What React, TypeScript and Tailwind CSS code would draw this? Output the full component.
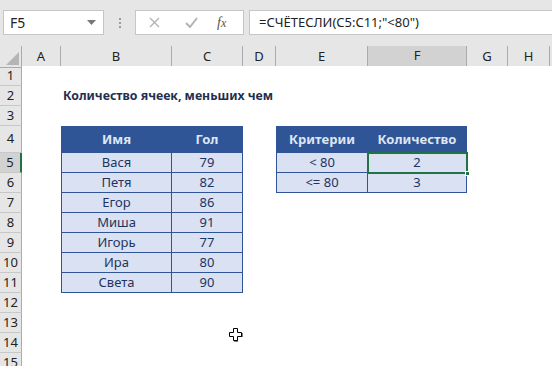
import React from "react";

const COLS = [
  { l: "", w: 22 },
  { l: "A", w: 39 },
  { l: "B", w: 111 },
  { l: "C", w: 71 },
  { l: "D", w: 33 },
  { l: "E", w: 92 },
  { l: "F", w: 99 },
  { l: "G", w: 41 },
  { l: "H", w: 42 },
];
const ROWH = [20, 20, 20, 27, 20, 20, 20, 20, 20, 20, 20, 20, 20, 20, 20];

const t1: [string, string][] = [
  ["Вася", "79"],
  ["Петя", "82"],
  ["Егор", "86"],
  ["Миша", "91"],
  ["Игорь", "77"],
  ["Ира", "80"],
  ["Света", "90"],
];
const t2: [string, string][] = [
  ["< 80", "2"],
  ["<= 80", "3"],
];

const font = { fontFamily: '"Noto Sans", "Open Sans", sans-serif' };

export default function App() {
  const cells: React.ReactNode[] = [];
  ROWH.forEach((_, ri) => {
    const r = ri + 1;
    cells.push(
      <div
        key={`rh${r}`}
        className={`flex items-center justify-center border-b border-[#c8c8c8] text-[13px] text-[#222] ${
          r === 5 ? "bg-[#d2d2d2] border-r-2 border-r-[#217346]" : "bg-[#e6e6e6] border-r border-r-[#ababab]"
        }`}
      >
        {r}
      </div>
    );
    for (let c = 1; c < COLS.length; c++) {
      const key = `c${r}-${c}`;
      const col = COLS[c].l;
      if ((col === "B" || col === "C") && r >= 4 && r <= 11) {
        const isHead = r === 4;
        const txt = isHead ? (col === "B" ? "Имя" : "Гол") : t1[r - 5][col === "B" ? 0 : 1];
        cells.push(
          <div
            key={key}
            className={`flex items-center justify-center border-b border-r border-[#2f5597] text-[13px] ${
              isHead ? "bg-[#2f5597] font-bold text-[#dfe6f3] border-t" : "bg-[#d9e1f2] text-[#1f3460]"
            } ${col === "B" ? "border-l" : ""}`}
          >
            {txt}
          </div>
        );
        continue;
      }
      if ((col === "E" || col === "F") && r >= 4 && r <= 6) {
        const isHead = r === 4;
        const txt = isHead ? (col === "E" ? "Критерии" : "Количество") : t2[r - 5][col === "E" ? 0 : 1];
        cells.push(
          <div
            key={key}
            className={`flex items-center justify-center border-b border-r border-[#2f5597] text-[13px] ${
              isHead ? "bg-[#2f5597] font-bold text-[#dfe6f3] border-t" : "bg-[#d9e1f2] text-[#1f3460]"
            } ${col === "E" ? "border-l" : ""}`}
          >
            {txt}
          </div>
        );
        continue;
      }
      if (col === "B" && r === 2) {
        cells.push(
          <div key={key} className="relative flex items-center bg-white">
            <span className="absolute left-[2px] whitespace-nowrap text-[12.3px] font-bold text-[#1f2f50]">
              Количество ячеек, меньших чем
            </span>
          </div>
        );
        continue;
      }
      cells.push(<div key={key} className="bg-white" />);
    }
  });

  return (
    <div className="relative h-[366px] w-[552px] overflow-hidden bg-white" style={font}>
      {/* formula bar */}
      <div className="flex h-[46px] items-center bg-[#e6e6e6] pl-[3px] pb-[1px]">
        <div className="flex h-[25px] w-[101px] items-center justify-between border border-[#c6c6c6] bg-white pl-[6px] pr-[7px] text-[14px] text-[#222]">
          <span>F5</span>
          <svg width="9" height="5" viewBox="0 0 9 5">
            <path d="M0 0h9L4.5 5z" fill="#777" />
          </svg>
        </div>
        <div className="flex w-[31px] flex-col items-center justify-center gap-[2px]">
          <span className="h-[2px] w-[2px] bg-[#9a9a9a]" />
          <span className="h-[2px] w-[2px] bg-[#9a9a9a]" />
          <span className="h-[2px] w-[2px] bg-[#9a9a9a]" />
        </div>
        <div className="flex h-[25px] w-[109px] items-center border border-[#c6c6c6] bg-white">
          <svg className="ml-[13px]" width="11" height="11" viewBox="0 0 11 11">
            <path d="M1 1l9 9M10 1l-9 9" stroke="#b3b3b3" strokeWidth="1.4" />
          </svg>
          <svg className="ml-[25px]" width="13" height="11" viewBox="0 0 13 11">
            <path d="M1 6l4 4L12 1" stroke="#b3b3b3" strokeWidth="2" fill="none" />
          </svg>
          <span
            className="ml-[19px] text-[14px] italic text-[#555]"
            style={{ fontFamily: '"Liberation Serif", serif' }}
          >
            f<span className="text-[12px]">x</span>
          </span>
        </div>
        <div className="ml-[5px] flex h-[25px] flex-1 items-center border border-r-0 border-[#c6c6c6] bg-white pl-[9px] text-[13px] text-[#222]">
          =СЧЁТЕСЛИ(C5:C11;"&lt;80")
        </div>
      </div>
      {/* column headers */}
      <div
        className="grid h-[20px] bg-[#e6e6e6]"
        style={{ gridTemplateColumns: COLS.map((c) => `${c.w}px`).join(" ") }}
      >
        {COLS.map((c, i) => (
          <div
            key={c.l + i}
            className={`flex items-center justify-center text-[13px] text-[#222] ${
              i === 0
                ? "relative border-r border-[#ababab] border-b border-b-[#ababab]"
                : c.l === "F"
                ? "bg-[#d2d2d2] border-r border-[#ababab] border-b-2 border-b-[#217346]"
                : "border-r border-[#ababab] border-b border-b-[#ababab]"
            }`}
          >
            {i === 0 ? (
              <svg className="absolute bottom-[2px] right-[2px]" width="13" height="13" viewBox="0 0 13 13">
                <path d="M13 0V13H0z" fill="#b5b5b5" />
              </svg>
            ) : (
              c.l
            )}
          </div>
        ))}
      </div>
      {/* grid */}
      <div
        className="grid"
        style={{
          gridTemplateColumns: COLS.map((c) => `${c.w}px`).join(" "),
          gridTemplateRows: ROWH.map((h) => `${h}px`).join(" "),
        }}
      >
        {cells}
      </div>
      {/* selection */}
      <div className="pointer-events-none absolute left-[367px] top-[152px] h-[22px] w-[101px] border-2 border-[#217346]" />
      <div className="absolute left-[465px] top-[171px] h-[5px] w-[5px] border border-white bg-[#217346]" />
      {/* cursor */}
      <svg className="absolute left-[228px] top-[327px]" width="16" height="15" viewBox="0 0 16 15">
        <path
          d="M5.5 1.5h4v4h4v4h-4v4h-4v-4h-4v-4h4z"
          fill="white"
          stroke="black"
          strokeWidth="1"
        />
        <path d="M10 14h-4M14 10v-4" stroke="black" strokeWidth="1" />
      </svg>
    </div>
  );
}
